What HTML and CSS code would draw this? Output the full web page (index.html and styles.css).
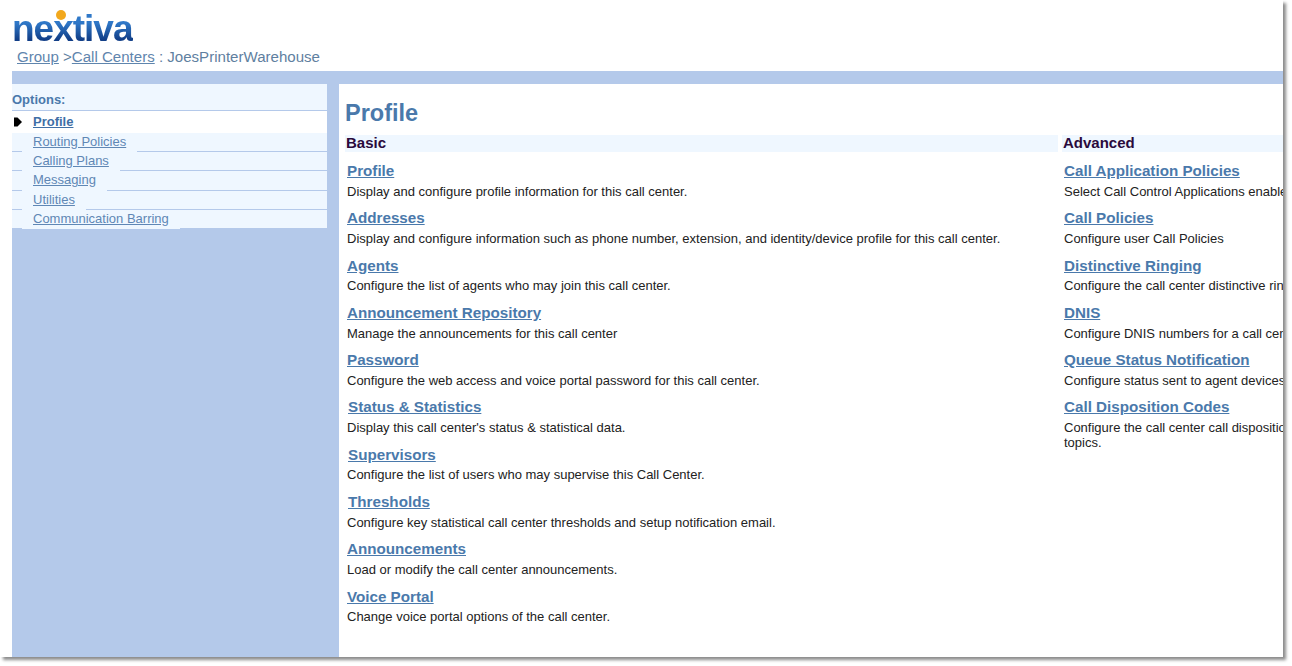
FILE: index.html
```html
<!DOCTYPE html>
<html lang="en">
<head>
<meta charset="utf-8">
<title>Profile</title>
<link rel="stylesheet" href="styles.css">
</head>
<body>
<div class="screen">
  <header class="header">
    <div class="logo"><span class="logo-text">nextiva</span><span class="logo-dot"></span></div>
    <div class="crumbs"><a href="#">Group</a> &gt;<a href="#">Call Centers</a> : JoesPrinterWarehouse</div>
  </header>
  <div class="bar"></div>
  <div class="main">
    <aside class="side">
      <nav class="panel">
        <div class="panel-title">Options:</div>
        <div class="nav-current">
          <svg class="pointer" width="10" height="10" viewBox="0 0 10 10"><path d="M1 0.5H4.5L9 5L4.5 9.5H1Z" fill="#000"/></svg>
          <a href="#">Profile</a>
        </div>
        <div class="nav-row"><a href="#">Routing Policies</a></div>
        <div class="nav-row"><a href="#">Calling Plans</a></div>
        <div class="nav-row"><a href="#">Messaging</a></div>
        <div class="nav-row"><a href="#">Utilities</a></div>
        <div class="nav-row nav-last"><a href="#">Communication Barring</a></div>
      </nav>
    </aside>
    <main class="content">
      <h1 class="title">Profile</h1>
      <div class="columns">
        <section class="col">
          <h2 class="col-head">Basic</h2>
          <div class="item"><a href="#">Profile</a><p>Display and configure profile information for this call center.</p></div>
          <div class="item"><a href="#">Addresses</a><p>Display and configure information such as phone number, extension, and identity/device profile for this call center.</p></div>
          <div class="item"><a href="#">Agents</a><p>Configure the list of agents who may join this call center.</p></div>
          <div class="item"><a href="#">Announcement Repository</a><p>Manage the announcements for this call center</p></div>
          <div class="item"><a href="#">Password</a><p>Configure the web access and voice portal password for this call center.</p></div>
          <div class="item nudge"><a href="#">Status &amp; Statistics</a><p>Display this call center's status &amp; statistical data.</p></div>
          <div class="item nudge"><a href="#">Supervisors</a><p>Configure the list of users who may supervise this Call Center.</p></div>
          <div class="item nudge"><a href="#">Thresholds</a><p>Configure key statistical call center thresholds and setup notification email.</p></div>
          <div class="item"><a href="#">Announcements</a><p>Load or modify the call center announcements.</p></div>
          <div class="item"><a href="#">Voice Portal</a><p>Change voice portal options of the call center.</p></div>
        </section>
        <section class="col">
          <h2 class="col-head">Advanced</h2>
          <div class="item"><a href="#">Call Application Policies</a><p>Select Call Control Applications enabled for this call center.</p></div>
          <div class="item"><a href="#">Call Policies</a><p>Configure user Call Policies</p></div>
          <div class="item"><a href="#">Distinctive Ringing</a><p>Configure the call center distinctive ringing.</p></div>
          <div class="item"><a href="#">DNIS</a><p>Configure DNIS numbers for a call center.</p></div>
          <div class="item"><a href="#">Queue Status Notification</a><p>Configure status sent to agent devices.</p></div>
          <div class="item"><a href="#">Call Disposition Codes</a><p>Configure the call center call disposition codes and<br>topics.</p></div>
        </section>
      </div>
    </main>
  </div>
</div>
</body>
</html>
```

FILE: styles.css
```css
html, body {
  margin: 0;
  height: 100%;
  background: #fff;
  overflow: hidden;
}
body {
  font-family: "Liberation Sans", Arial, sans-serif;
}
.screen {
  width: 1283px;
  height: 657px;
  background: #fff;
  box-shadow: 3px 3px 3px #8c8c8c;
  display: flex;
  flex-direction: column;
  overflow: hidden;
  margin-bottom: 9px;
}
.header {
  height: 71px;
  flex: none;
  padding-left: 12px;
  box-sizing: border-box;
}
.logo {
  position: relative;
  height: 46px;
  padding-top: 14px;
  box-sizing: border-box;
}
.logo-text {
  display: block;
  width: fit-content;
  font-weight: 700;
  font-size: 37px;
  line-height: 30px;
  letter-spacing: -1px;
  background: linear-gradient(180deg, #2f78c8 30%, #123f88 85%);
  -webkit-background-clip: text;
  background-clip: text;
  color: transparent;
}
.logo-dot {
  position: absolute;
  left: 44px;
  top: 10px;
  width: 10px;
  height: 10px;
  border-radius: 50%;
  background: #f2a81d;
}
.crumbs {
  padding-left: 5px;
  font-size: 15.07px;
  line-height: 22px;
  color: #5f7f9f;
}
.crumbs a {
  color: #5f85ad;
  text-decoration: underline;
}
.bar {
  height: 13px;
  flex: none;
  margin-left: 12px;
  background: #b4c9ea;
}
.main {
  flex: 1;
  display: flex;
  margin-left: 12px;
  min-height: 0;
}
.side {
  width: 327px;
  flex: none;
  background: #b4c9ea;
  padding-right: 12px;
  box-sizing: border-box;
}
.panel {
  background: #eff7ff;
}
.panel-title {
  height: 27px;
  box-sizing: border-box;
  border-bottom: 1px solid #b4c9ea;
  padding-top: 8px;
  font-size: 13px;
  font-weight: 700;
  line-height: 15px;
  color: #4a79ab;
}
.nav-current {
  height: 21.6px;
  background: #fff;
  display: flex;
  align-items: center;
  font-size: 13px;
  font-weight: 700;
}
.nav-current a {
  color: #3f6fa6;
  margin-left: 10px;
}
.pointer {
  margin-left: 1px;
  flex: none;
}
.nav-row {
  height: 19.35px;
  box-sizing: border-box;
  border-bottom: 1px solid #b4c9ea;
  font-size: 13px;
}
.nav-row a {
  display: inline-block;
  height: 19.35px;
  box-sizing: border-box;
  margin-left: 10px;
  padding: 1px 11px 0;
  line-height: 16px;
  background: #eff7ff;
  color: #5f87b5;
  vertical-align: top;
}
.nav-last {
  border-bottom: 0;
  height: 18px;
}
.content {
  flex: 1;
  min-width: 0;
  background: #fff;
  border-top-left-radius: 6px;
  overflow: hidden;
  padding-left: 6px;
}
.title {
  margin: 0;
  padding-top: 14px;
  height: 37px;
  font-size: 23.5px;
  line-height: 31px;
  font-weight: 700;
  color: #4a79ab;
}
.columns {
  display: grid;
  grid-template-columns: 713px 420px;
  column-gap: 4px;
  width: 1140px;
}
.col-head {
  margin: 0;
  height: 17px;
  padding-left: 1px;
  font-size: 15px;
  line-height: 16px;
  font-weight: 700;
  color: #2a0a3c;
  background: #eff7ff;
}
.item {
  height: 47.3px;
  padding-left: 2px;
}
.col-head + .item {
  margin-top: 9px;
}
.item a {
  display: block;
  width: fit-content;
  font-size: 15.2px;
  font-weight: 700;
  line-height: 20px;
  color: #4a79ab;
}
.item p {
  margin: 0;
  font-size: 13px;
  line-height: 15px;
  padding-top: 2.7px;
  color: #222;
}
.nudge a {
  margin-left: 1px;
}
```
